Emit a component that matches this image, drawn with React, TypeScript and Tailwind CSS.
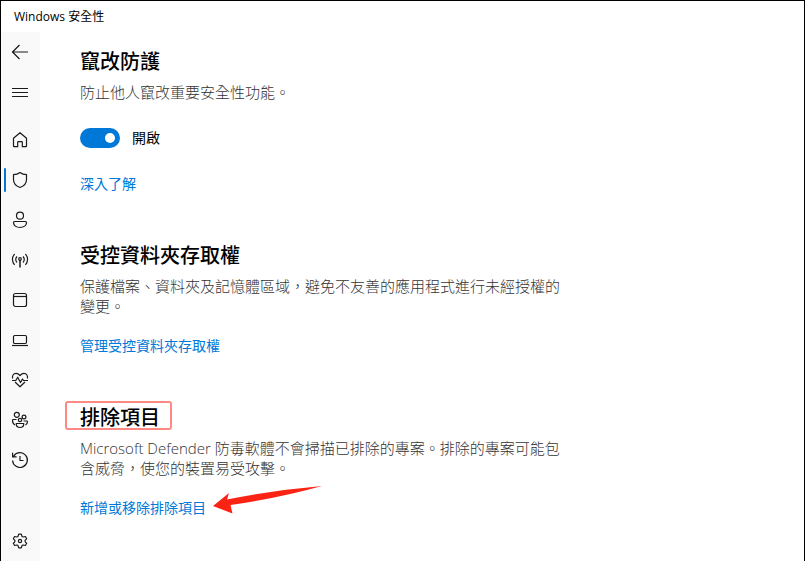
import React, { useState } from "react";
import clsx from "clsx";

type NavItem = {
  label: string;
  icon: React.ReactNode;
};

type SectionProps = {
  title: string;
  description: string;
  highlighted?: boolean;
  children: React.ReactNode;
};

const TOP_ITEMS: NavItem[] = [
  { label: "上一頁", icon: <path d="M18 10H2.5M9.500 3L2.500 10l7 7" /> },
  { label: "功能表", icon: <path d="M2 6.500h16M2 10.500h16M2 14.500h16" /> },
];

const PAGE_ITEMS: NavItem[] = [
  {
    label: "首頁",
    icon: (
      <path d="M10 2.700L3.500 8.300v7.700a.7.7 0 0 0 .7.7H7.700v-4.500a.5.5 0 0 1 .5-.5h3.600a.5.5 0 0 1 .5.5v4.500h3.500a.7.7 0 0 0 .7-.7V8.300z" />
    ),
  },
  {
    label: "病毒與威脅防護",
    icon: (
      <path d="M10 2.500c2 1.500 4.200 2.100 6.500 2.200v4.800c0 3.800-2.300 6.500-6.500 8-4.200-1.500-6.500-4.200-6.500-8V4.700c2.300-.1 4.500-.7 6.500-2.200z" />
    ),
  },
  {
    label: "帳戶防護",
    icon: (
      <>
        <circle cx="10" cy="5.700" r="3.500" />
        <path d="M4.500 11.500h11a1 1 0 0 1 1 1c0 3-2.800 5-6.500 5s-6.500-2-6.500-5a1 1 0 0 1 1-1z" />
      </>
    ),
  },
  {
    label: "防火牆與網路保護",
    icon: (
      <>
        <circle cx="10" cy="9" r="1.300" />
        <path d="M10 10v7.500" strokeWidth="1.500" />
        <path d="M7 12.500a4.200 4.200 0 0 1 0-6M13 12.500a4.200 4.200 0 0 0 0-6M4.600 14.800a7.600 7.600 0 0 1 0-10.600M15.400 14.800a7.600 7.600 0 0 0 0-10.600" />
      </>
    ),
  },
  {
    label: "應用程式與瀏覽器控制",
    icon: (
      <>
        <rect x="3.500" y="3.500" width="13" height="13" rx="2" />
        <path d="M3.500 6.500h13" />
      </>
    ),
  },
  {
    label: "裝置安全性",
    icon: (
      <>
        <rect x="3.500" y="5.500" width="13" height="8" rx="1.200" />
        <path d="M2 15.500h16" />
      </>
    ),
  },
  {
    label: "裝置效能與運作狀況",
    icon: (
      <>
        <path d="M2.600 8.500C1.900 5.500 3.700 3.300 6 3.300c1.800 0 3 1 4 2.200 1-1.200 2.200-2.200 4-2.200 2.300 0 4.100 2.200 3.400 5.200M5 12l5 4.800 5-4.800" />
        <path d="M2 10.500h3.800l1.900-3.300 2.800 5.300 2-3.500 1 1.500H18" />
      </>
    ),
  },
  {
    label: "家長監護選項",
    icon: (
      <>
        <circle cx="6.800" cy="4.800" r="2.500" />
        <circle cx="14" cy="7" r="1.900" />
        <circle cx="10" cy="10" r="1.700" />
        <path d="M6.200 13.500h7.600c0 2.500-1.400 4-3.800 4s-3.800-1.500-3.800-4z" />
        <path d="M6.500 9.500H3.200c-.5 0-.7.3-.7.800 0 2.200.9 3.800 2.500 4.700M13.500 11h3.400c.4 0 .6.300.6.600 0 1.600-.8 2.800-2 3.400" />
      </>
    ),
  },
  {
    label: "保護歷程記錄",
    icon: (
      <>
        <path d="M2.600 10.500A7.400 7.400 0 1 0 3.500 6.500M2.600 2.800v4h4" />
        <path d="M10 6v4.500h3.500" />
      </>
    ),
  },
];

const SETTINGS_ITEM: NavItem = {
  label: "設定",
  icon: (
    <>
      <circle cx="10" cy="10" r="1.600" />
      <path d="M8.700 3.100h2.600l.7 2.300 1 .6 2.400-.5 1.300 2.200-1.600 1.700v1.200l1.600 1.700-1.300 2.200-2.400-.5-1 .6-.7 2.300H8.700L8 14.600l-1-.6-2.400.5-1.300-2.200 1.600-1.700V9.400L3.300 7.700l1.300-2.200L7 6l1-.6z" />
    </>
  ),
};

function NavButton({
  item,
  active,
  onClick,
}: {
  item: NavItem;
  active?: boolean;
  onClick?: () => void;
}) {
  return (
    <button
      type="button"
      aria-label={item.label}
      aria-current={active ? "page" : undefined}
      onClick={onClick}
      className="relative flex h-10 w-full shrink-0 items-center pl-[9px] text-[#1a1a1a] hover:bg-black/5"
    >
      {active && (
        <span className="absolute left-[3px] top-2 h-6 w-0.5 rounded-full bg-[#0078d7]" />
      )}
      <svg
        viewBox="0 0 20 20"
        className="size-5"
        fill="none"
        stroke="currentColor"
        strokeWidth="1.2"
        strokeLinejoin="round"
        aria-hidden="true"
      >
        {item.icon}
      </svg>
    </button>
  );
}

function Section({ title, description, highlighted, children }: SectionProps) {
  return (
    <section className="flex flex-col items-start">
      <h2 className="relative text-xl leading-7 font-medium text-black">
        {title}
        {highlighted && (
          <span className="absolute -top-[3px] -right-3 bottom-0.5 -left-[15px] rounded-[3px] border-2 border-[#ff8a84]" />
        )}
      </h2>
      <p className="mt-1.5 text-[15px] leading-5 font-light text-[#333333]">
        {description}
      </p>
      {children}
    </section>
  );
}

function TextLink({ children }: { children: React.ReactNode }) {
  return (
    <a
      href="#"
      className="text-sm leading-5 text-[#0078d7] hover:text-[#666666]"
    >
      {children}
    </a>
  );
}

export default function App() {
  const [current, setCurrent] = useState(1);
  const [enabled, setEnabled] = useState(true);

  return (
    <div className="flex min-h-screen flex-col border-x border-t border-black bg-white font-['Open_Sans','Noto_Sans_CJK_TC',sans-serif]">
      <header className="flex h-[31px] items-center pl-[13px] text-xs text-black">
        <h1>Windows 安全性</h1>
      </header>

      <div className="flex flex-1">
        <nav className="flex w-[39px] shrink-0 flex-col bg-[#f9f9f9]">
          {TOP_ITEMS.map((item) => (
            <NavButton key={item.label} item={item} />
          ))}
          <div className="mt-2 flex flex-col">
            {PAGE_ITEMS.map((item, idx) => (
              <NavButton
                key={item.label}
                item={item}
                active={idx === current}
                onClick={() => setCurrent(idx)}
              />
            ))}
          </div>
          <div className="mt-auto">
            <NavButton item={SETTINGS_ITEM} />
          </div>
        </nav>

        <main className="flex max-w-[530px] flex-1 flex-col gap-12 pt-4 pl-10">
          <Section title="竄改防護" description="防止他人竄改重要安全性功能。">
            <label className="my-[26px] flex h-5 cursor-pointer items-center gap-3 text-sm text-black">
              <input
                type="checkbox"
                role="switch"
                checked={enabled}
                onChange={(e) => setEnabled(e.target.checked)}
                className="peer sr-only"
              />
              <span
                className={clsx(
                  "flex h-5 w-10 items-center rounded-full px-[5px]",
                  enabled ? "justify-end bg-[#0078d7]" : "bg-[#999999]",
                )}
              >
                <span className="size-2.5 rounded-full bg-white" />
              </span>
              {enabled ? "開啟" : "關閉"}
            </label>
            <TextLink>深入了解</TextLink>
          </Section>

          <Section
            title="受控資料夾存取權"
            description="保護檔案、資料夾及記憶體區域，避免不友善的應用程式進行未經授權的變更。"
          >
            <div className="mt-5 flex">
              <TextLink>管理受控資料夾存取權</TextLink>
            </div>
          </Section>

          <Section
            title="排除項目"
            description="Microsoft Defender 防毒軟體不會掃描已排除的專案。排除的專案可能包含威脅，使您的裝置易受攻擊。"
            highlighted
          >
            <div className="relative mt-5 flex">
              <TextLink>新增或移除排除項目</TextLink>
              <svg
                viewBox="0 0 109 28"
                className="absolute -top-3 left-full ml-[7px] h-7 w-[109px]"
                fill="#fb2314"
                aria-hidden="true"
              >
                <path d="M0 20L16 7l-2 6.500Q62 4 109 0 64 12.500 17.500 19l2 8.500z" />
              </svg>
            </div>
          </Section>
        </main>
      </div>
    </div>
  );
}
